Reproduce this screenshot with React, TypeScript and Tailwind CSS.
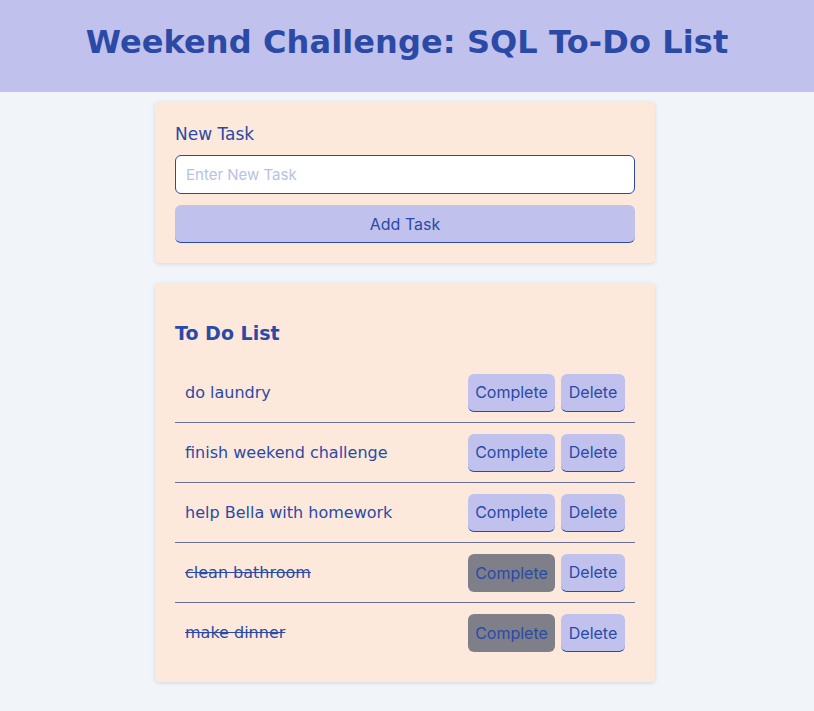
import { useState } from "react";

type Task = { id: number; task: string; done: boolean };

const initial: Task[] = [
  { id: 1, task: "do laundry", done: false },
  { id: 2, task: "finish weekend challenge", done: false },
  { id: 3, task: "help Bella with homework", done: false },
  { id: 4, task: "clean bathroom", done: true },
  { id: 5, task: "make dinner", done: true },
];

export default function App() {
  const [tasks, setTasks] = useState<Task[]>(initial);
  const [text, setText] = useState("");

  const add = () => {
    if (!text.trim()) return;
    setTasks(t => [...t, { id: Date.now(), task: text, done: false }]);
    setText("");
  };

  return (
    <div className="min-h-screen bg-[#f1f4f8] text-[#2b4aa6] font-['DejaVu_Sans',Verdana,sans-serif]">
      {/* Header */}
      <header className="h-[92px] bg-[#c0c1ed] flex items-center justify-center">
        <h1 className="text-[32px] font-bold tracking-[0.1px] pb-2">Weekend Challenge: SQL To-Do List</h1>
      </header>

      <div className="flex justify-center pr-1">
        <main className="w-[500px] pt-[10px] pb-8 flex flex-col gap-5">
          {/* New task form */}
          <section className="bg-[#fce9dc] rounded shadow-[0_1px_4px_rgba(0,0,0,0.12)] px-5 pt-[22px] pb-5">
            <label className="block text-[17px] leading-5 mb-[11px]">New Task</label>
            <input
              value={text}
              onChange={e => setText(e.target.value)}
              placeholder="Enter New Task"
              className="w-full h-[39px] bg-white border border-[#2b4aa6] rounded-md px-[10px] text-[15px] font-['Inter',sans-serif] placeholder-[#b7c2e4] focus:outline-none"
            />
            <button
              onClick={add}
              className="mt-[11px] w-full h-[38px] bg-[#c0c1ed] rounded-md border-b border-[#2b4aa6] text-[16px] font-['Inter',sans-serif]"
            >
              Add Task
            </button>
          </section>

          {/* List */}
          <section className="bg-[#fce9dc] rounded shadow-[0_1px_4px_rgba(0,0,0,0.12)] px-5 pt-[38px] pb-[19px]">
            <h2 className="text-[19px] font-bold leading-6 mb-[18px]">To Do List</h2>
            <ul>
              {tasks.map((t, i) => (
                <li
                  key={t.id}
                  className={`flex items-center justify-between h-[60px] px-[10px] ${i < tasks.length - 1 ? "border-b border-b-[#6a6f94]" : ""}`}
                >
                  <span className={`text-[16px] ${t.done ? "line-through" : ""}`}>{t.task}</span>
                  <div className="flex gap-[6px] font-['Inter',sans-serif] text-[16px]">
                    <button
                      onClick={() => setTasks(ts => ts.map(x => (x.id === t.id ? { ...x, done: true } : x)))}
                      className={`w-[87px] h-[38px] rounded-md ${t.done ? "bg-[#7e7f89]" : "bg-[#c0c1ed] border-b border-b-[#2b4aa6]"}`}
                    >
                      Complete
                    </button>
                    <button
                      onClick={() => setTasks(ts => ts.filter(x => x.id !== t.id))}
                      className="w-[64px] h-[38px] rounded-md bg-[#c0c1ed] border-b border-b-[#2b4aa6]"
                    >
                      Delete
                    </button>
                  </div>
                </li>
              ))}
            </ul>
          </section>
        </main>
      </div>
    </div>
  );
}
